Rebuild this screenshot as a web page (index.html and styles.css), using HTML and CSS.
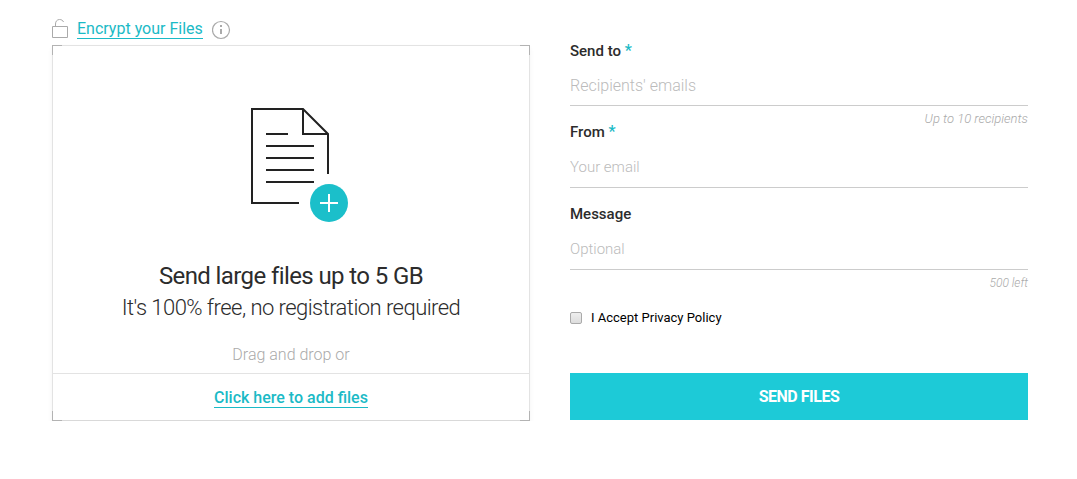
FILE: index.html
```html
<!DOCTYPE html>
<html lang="en">

<head>
 <meta charset="UTF-8">
 <meta name="viewport" content="width=device-width, initial-scale=1.0">
 <title>Send large files</title>
 <link rel="stylesheet" href="styles.css">
</head>

<body>
 <form class="send" action="">
  <section class="files">
   <div class="encrypt">
    <svg class="lock" width="16" height="20" viewBox="0 0 16 20" fill="none" stroke="#aaa">
     <path d="M.5 7.500h15v11H.5zM3.500 7.500V5c0-2.500 1.500-4.500 4-4.500 2 0 3.500 1 4 2.500" />
    </svg>
    <a href="#">Encrypt your Files</a>
    <svg class="info" width="20" height="20" viewBox="0 0 20 20" fill="none" stroke="#aaa">
     <circle cx="9" cy="10" r="8.500" stroke-width="1.200" />
     <path d="M9 5v2M9 9v5" stroke-width="2" />
    </svg>
   </div>
   <div class="drop">
    <span class="corner top-left"></span>
    <span class="corner top-right"></span>
    <span class="corner bottom-left"></span>
    <span class="corner bottom-right"></span>
    <div class="drop-body">
     <svg class="document" width="116" height="115" viewBox="-18 0 116 115" fill="none" stroke="#222" stroke-width="2">
      <path d="M48 95H1V1h51l25 25v40M52 1v25h25M15 26h22M15 38h48M15 50h48M15 62h48M15 74h48" />
      <circle cx="78" cy="95" r="19" fill="#1bbfca" stroke="none" />
      <path d="M69 95h18M78 86v18" stroke="#fff" />
     </svg>
     <h1>Send large files up to 5 GB</h1>
     <h2>It's 100% free, no registration required</h2>
     <p>Drag and drop or</p>
    </div>
    <div class="drop-footer"><a href="#">Click here to add files</a></div>
   </div>
  </section>

  <section class="details">
   <div class="field">
    <label for="sendTo">Send to <span class="required">*</span></label>
    <input type="text" id="sendTo" class="recipients" placeholder="Recipients' emails">
    <span class="hint">Up to 10 recipients</span>
   </div>
   <div class="field">
    <label for="from">From <span class="required">*</span></label>
    <input type="email" id="from" placeholder="Your email">
   </div>
   <div class="field">
    <label for="message">Message</label>
    <input type="text" id="message" placeholder="Optional">
    <span class="hint small">500 left</span>
   </div>
   <div class="accept">
    <input type="checkbox" id="privacy">
    <label for="privacy">I Accept Privacy Policy</label>
   </div>
   <button type="submit">SEND FILES</button>
  </section>
 </form>
</body>

</html>
```
FILE: styles.css
```css
* {
 box-sizing: border-box;
}

body {
 margin: 0;
 background-color: #fff;
 color: #2c2c2c;
 font-family: Roboto, Arial, sans-serif;
 font-size: 16px;
}

h1, h2, p {
 margin: 0;
}

a {
 color: #1bbac6;
 text-decoration: none;
 border-bottom: 1px solid #1bbac6;
}

.send {
 display: grid;
 grid-template-columns: 239fr 229fr;
 gap: 40px;
 padding: 19px 49px 0 52px;
}

.files {
 display: flex;
 flex-direction: column;
}

.encrypt {
 display: flex;
 align-items: flex-start;
 height: 26px;
}

.encrypt a {
 margin: 0 9px;
 line-height: 19px;
}

.info {
 margin-top: 1px;
}

.drop {
 position: relative;
 border: 1px solid #e3e3e3;
 border-bottom-color: #d9d9d9;
 box-shadow: 0 3px 5px rgba(0, 0, 0, .05);
 text-align: center;
}

.corner {
 position: absolute;
 width: 10px;
 height: 10px;
 border: 0 solid #b3b3b3;
}

.top-left {
 top: -1px;
 left: -1px;
 border-width: 1px 0 0 1px;
}

.top-right {
 top: -1px;
 right: -1px;
 border-width: 1px 1px 0 0;
}

.bottom-left {
 bottom: -1px;
 left: -1px;
 border-width: 0 0 1px 1px;
}

.bottom-right {
 right: -1px;
 bottom: -1px;
 border-width: 0 1px 1px 0;
}

.drop-body {
 padding: 62px 20px 7px;
}

.document {
 display: block;
 margin: 0 auto 37px;
}

h1 {
 font-size: 24px;
 font-weight: 400;
 line-height: 32px;
 letter-spacing: -.025em;
}

h2 {
 font-size: 22px;
 font-weight: 300;
 line-height: 32px;
 letter-spacing: -.025em;
}

.drop-body p {
 margin-top: 20px;
 color: #aaa;
 font-weight: 300;
 line-height: 22px;
}

.drop-footer {
 border-top: 1px solid #e3e3e3;
 padding: 15px 14px 13px;
 line-height: 18px;
}

.drop-footer a {
 font-weight: 500;
}

.details {
 display: flex;
 flex-direction: column;
 padding-top: 23px;
}

.field {
 position: relative;
 display: flex;
 flex-direction: column;
 margin-bottom: 17px;
}

.field label {
 font-size: 15px;
 font-weight: 500;
 line-height: 18px;
}

.required {
 color: #1bbac6;
 font-size: 16px;
 line-height: 16px;
}

.field input {
 height: 47px;
 border: 0;
 border-bottom: 1px solid #ccc;
 padding: 6px 0 0;
 background: none;
 color: #2c2c2c;
 font: 300 15px Roboto, Arial, sans-serif;
 outline: none;
}

.field .recipients {
 height: 46px;
 font-size: 16px;
}

.field input::placeholder {
 color: #bbb;
}

.hint {
 position: absolute;
 top: 100%;
 right: 0;
 color: #aaa;
 font-size: 13px;
 font-style: italic;
 font-weight: 300;
 line-height: 26px;
}

.hint.small {
 font-size: 12px;
}

.accept {
 display: flex;
 align-items: center;
 gap: 9px;
 margin: 21px 0 45px;
 color: #000;
 font-size: 13px;
 line-height: 20px;
}

.accept input {
 appearance: none;
 width: 12px;
 height: 12px;
 margin: 0;
 border: 1px solid #aaa;
 border-radius: 2px;
 background: linear-gradient(#eee, #ddd);
}

.accept input:checked {
 background: #1dcad7;
}

button {
 height: 47px;
 border: 0;
 background-color: #1dcad7;
 color: #fff;
 font: 700 16px Roboto, Arial, sans-serif;
 letter-spacing: -.03em;
 cursor: pointer;
}
```
